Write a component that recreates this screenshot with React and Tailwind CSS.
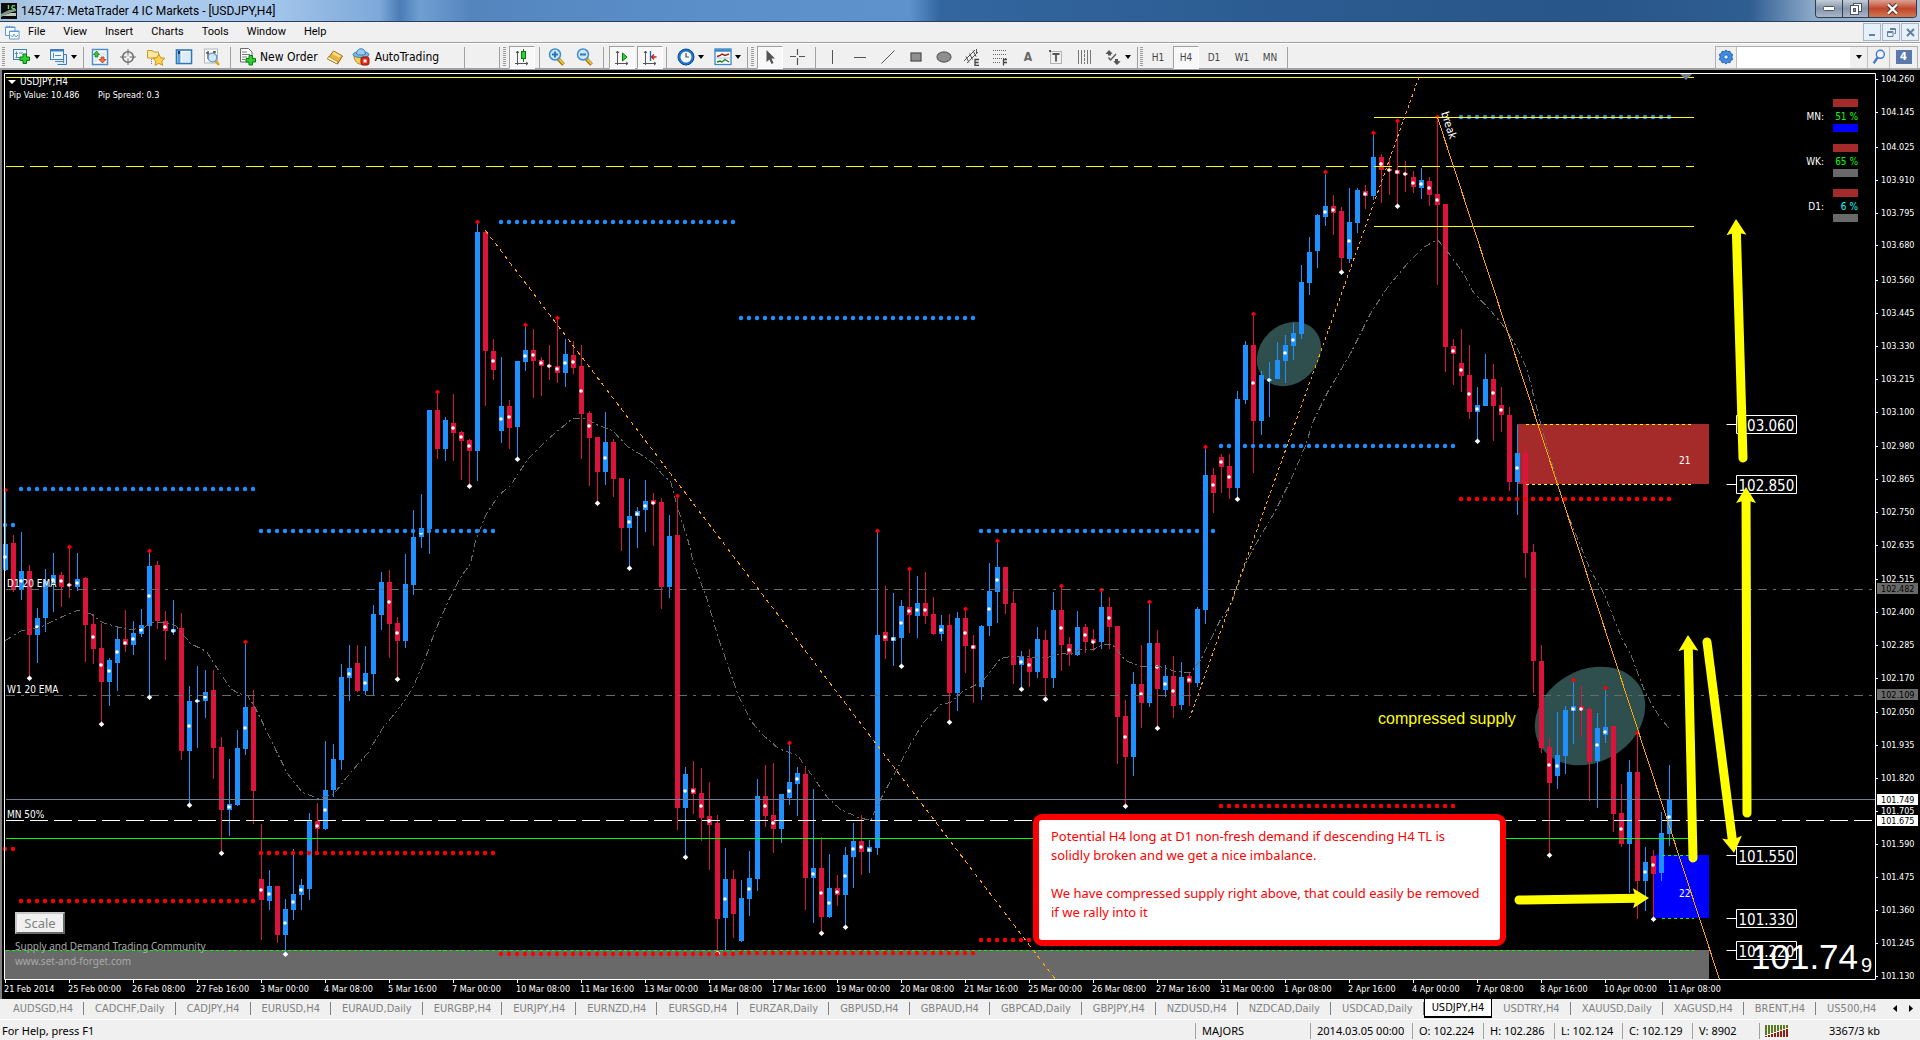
import React, { useState } from "react";

// One row per H4 bar: direction, high, body top, body bottom, low, mid dot, fractal (p = peak, t = trough, pt = both)
const bars = [
    ["u", 490, 544, 570, 571, 557, "p"],
    ["d", 535, 543, 590, 592],
    ["u", 532, 571, 590, 600, 581],
    ["d", 565, 571, 635, 678, 0, "t"],
    ["u", 608, 618, 635, 663, 627],
    ["u", 569, 581, 618, 632],
    ["u", 553, 575, 583, 612, 580],
    ["d", 572, 575, 587, 607, 581],
    ["d", 547, 584, 586, 598, 585, "p"],
    ["u", 553, 579, 587, 591, 583],
    ["d", 577, 578, 625, 662],
    ["d", 614, 624, 649, 664, 637],
    ["d", 623, 648, 682, 724, 665, "t"],
    ["u", 658, 660, 682, 706, 671],
    ["u", 626, 639, 663, 691, 652],
    ["d", 610, 639, 645, 652, 643],
    ["u", 621, 633, 645, 655, 639],
    ["u", 609, 625, 634, 637, 630],
    ["u", 551, 566, 626, 697, 596, "pt"],
    ["d", 561, 565, 621, 629],
    ["d", 611, 621, 631, 660, 627],
    ["u", 600, 629, 632, 635, 631],
    ["d", 613, 628, 751, 760],
    ["u", 686, 701, 751, 805, 726, "t"],
    ["u", 666, 700, 702, 748, 701],
    ["u", 670, 692, 701, 718, 697],
    ["d", 670, 690, 748, 779],
    ["d", 737, 747, 810, 853, 0, "t"],
    ["u", 759, 804, 810, 836, 807],
    ["u", 730, 748, 805, 806],
    ["u", 642, 707, 749, 755, 728, "p"],
    ["d", 690, 707, 791, 824],
    ["d", 824, 879, 900, 940, 890],
    ["u", 870, 886, 901, 910, 894],
    ["d", 886, 886, 935, 943],
    ["u", 899, 909, 935, 954, 923, "t"],
    ["u", 849, 894, 910, 920, 902],
    ["u", 879, 885, 895, 910, 890],
    ["u", 813, 821, 889, 900],
    ["d", 803, 821, 829, 852, 826],
    ["u", 741, 790, 829, 830, 810],
    ["u", 744, 759, 790, 797],
    ["u", 664, 677, 760, 770],
    ["u", 645, 668, 678, 701, 674],
    ["d", 645, 663, 691, 692],
    ["u", 646, 673, 691, 695, 683],
    ["u", 605, 614, 674, 695],
    ["u", 572, 582, 615, 630],
    ["d", 570, 582, 624, 658, 602],
    ["d", 617, 623, 641, 679, 633, "t"],
    ["u", 554, 584, 641, 648],
    ["u", 510, 537, 585, 595],
    ["u", 494, 528, 537, 548, 533],
    ["u", 410, 410, 529, 554],
    ["d", 392, 410, 449, 459, 0, "p"],
    ["u", 417, 420, 449, 461],
    ["d", 394, 423, 433, 461, 428],
    ["d", 431, 432, 441, 480, 437],
    ["d", 439, 440, 451, 486, 446, "t"],
    ["u", 222, 232, 451, 481, 0, "p"],
    ["d", 231, 232, 351, 406],
    ["d", 339, 351, 370, 380, 361],
    ["u", 357, 406, 431, 443, 419],
    ["d", 400, 406, 428, 449, 417],
    ["u", 361, 361, 427, 459, 0, "t"],
    ["u", 325, 350, 362, 371, 356, "p"],
    ["d", 329, 350, 361, 398, 355],
    ["d", 357, 360, 366, 396, 363],
    ["d", 345, 365, 367, 380, 366],
    ["d", 318, 366, 373, 383, 369, "p"],
    ["u", 339, 354, 373, 387, 363],
    ["d", 341, 355, 368, 374, 362],
    ["d", 345, 366, 414, 459, 391],
    ["d", 411, 413, 438, 486, 426],
    ["d", 437, 437, 472, 503, 0, "t"],
    ["u", 412, 442, 472, 485, 458],
    ["d", 439, 442, 479, 497],
    ["d", 478, 478, 528, 551],
    ["u", 479, 516, 528, 568, 522, "t"],
    ["u", 507, 511, 516, 548, 514],
    ["u", 480, 501, 510, 532, 506],
    ["d", 493, 500, 504, 546, 503],
    ["d", 498, 502, 587, 609],
    ["u", 515, 536, 587, 598],
    ["d", 496, 535, 808, 830, 0, "p"],
    ["u", 767, 774, 808, 857, 791, "t"],
    ["d", 761, 788, 794, 814, 791],
    ["d", 768, 793, 818, 841, 806],
    ["d", 782, 816, 825, 870, 821],
    ["d", 815, 823, 919, 953, 0, "t"],
    ["u", 848, 879, 918, 950, 899],
    ["d", 870, 879, 914, 938],
    ["u", 880, 898, 941, 942],
    ["u", 851, 878, 899, 916, 889],
    ["u", 779, 796, 879, 891],
    ["d", 765, 796, 816, 827, 806],
    ["d", 763, 815, 829, 853, 823],
    ["u", 794, 794, 829, 843],
    ["u", 743, 782, 798, 805, 791, "p"],
    ["u", 767, 773, 784, 816, 779],
    ["d", 767, 774, 878, 910],
    ["u", 789, 868, 878, 923, 874],
    ["d", 837, 868, 917, 933, 893, "t"],
    ["u", 854, 888, 917, 918, 903],
    ["d", 875, 888, 895, 906, 892],
    ["u", 847, 855, 895, 927, 876, "t"],
    ["u", 823, 841, 857, 888, 849],
    ["d", 815, 841, 852, 875, 847],
    ["u", 840, 847, 852, 873, 850],
    ["u", 531, 635, 848, 855, 0, "p"],
    ["d", 586, 632, 641, 659, 637],
    ["u", 593, 637, 641, 666, 639],
    ["u", 600, 606, 638, 666, 623, "t"],
    ["d", 569, 607, 615, 633, 611, "p"],
    ["u", 576, 603, 616, 638, 610],
    ["d", 572, 603, 616, 624, 610],
    ["d", 597, 614, 634, 635],
    ["u", 615, 625, 634, 641, 630],
    ["d", 614, 625, 693, 722, 0, "t"],
    ["u", 612, 618, 693, 711],
    ["d", 609, 618, 646, 673, 633, "p"],
    ["d", 635, 645, 649, 703, 647],
    ["u", 625, 626, 687, 700],
    ["u", 563, 591, 626, 636, 609],
    ["u", 541, 567, 592, 623, 580, "p"],
    ["d", 567, 567, 604, 614],
    ["d", 591, 603, 665, 684],
    ["u", 651, 657, 665, 689, 662, "t"],
    ["d", 649, 658, 672, 687, 665],
    ["u", 627, 639, 672, 678],
    ["d", 630, 640, 678, 699, 0, "t"],
    ["u", 592, 610, 678, 688],
    ["d", 586, 610, 645, 671, 628, "p"],
    ["d", 637, 644, 654, 666, 650],
    ["u", 611, 627, 655, 656],
    ["d", 624, 627, 642, 653, 635],
    ["d", 629, 639, 643, 651, 642],
    ["u", 590, 607, 642, 649, 0, "p"],
    ["d", 597, 607, 627, 649, 618],
    ["d", 626, 626, 717, 764],
    ["d", 700, 716, 757, 806, 737, "t"],
    ["u", 672, 684, 757, 776],
    ["d", 645, 684, 703, 728, 694],
    ["u", 602, 643, 703, 707, 0, "p"],
    ["d", 630, 643, 689, 728, 667, "t"],
    ["u", 665, 676, 690, 697, 684],
    ["d", 656, 676, 706, 718, 691],
    ["u", 662, 677, 705, 710],
    ["d", 672, 676, 683, 706, 680],
    ["u", 607, 609, 683, 687],
    ["u", 447, 475, 610, 624, 0, "p"],
    ["d", 468, 475, 493, 513, 485],
    ["d", 454, 457, 467, 493, 462],
    ["d", 454, 466, 488, 499, 477],
    ["u", 391, 399, 488, 499, 0, "t"],
    ["u", 341, 345, 400, 404],
    ["d", 314, 345, 421, 473, 383, "p"],
    ["u", 371, 375, 421, 435],
    ["u", 362, 379, 381, 417, 380],
    ["u", 342, 360, 379, 379],
    ["u", 335, 345, 361, 383, 353],
    ["u", 323, 333, 346, 360, 340],
    ["u", 265, 282, 334, 339],
    ["u", 237, 252, 283, 295],
    ["u", 214, 215, 251, 268],
    ["u", 172, 206, 217, 226, 212, "p"],
    ["d", 195, 206, 213, 235, 210],
    ["d", 207, 211, 258, 272, 0, "t"],
    ["u", 188, 222, 259, 263, 241],
    ["u", 188, 190, 223, 233],
    ["d", 185, 191, 196, 209, 194],
    ["u", 133, 157, 196, 200, 0, "p"],
    ["d", 154, 157, 170, 203, 164],
    ["d", 158, 169, 171, 195, 170],
    ["d", 121, 170, 174, 206, 172, "pt"],
    ["d", 161, 173, 175, 192, 174],
    ["d", 171, 177, 187, 193, 183],
    ["u", 168, 180, 188, 199, 184],
    ["d", 177, 181, 195, 206, 188],
    ["d", 117, 194, 205, 285, 200, "p"],
    ["d", 204, 204, 347, 372],
    ["d", 339, 346, 354, 385, 351],
    ["d", 329, 363, 376, 392, 370],
    ["d", 345, 375, 412, 419, 394],
    ["u", 387, 405, 412, 441, 409, "t"],
    ["u", 354, 379, 406, 406],
    ["d", 364, 379, 406, 441, 393],
    ["d", 387, 405, 415, 432, 410],
    ["d", 407, 415, 482, 491],
    ["u", 425, 453, 482, 515, 468],
    ["d", 445, 453, 553, 578],
    ["d", 544, 552, 661, 693],
    ["d", 645, 661, 748, 753],
    ["d", 738, 747, 783, 855, 765, "t"],
    ["u", 712, 755, 776, 789, 766],
    ["u", 706, 710, 756, 774],
    ["u", 680, 706, 711, 744, 709, "p"],
    ["d", 686, 706, 710, 737, 709],
    ["d", 707, 709, 762, 801],
    ["u", 713, 728, 761, 808, 745],
    ["u", 688, 727, 735, 743, 732, "p"],
    ["d", 726, 726, 814, 832],
    ["d", 784, 813, 844, 847, 829],
    ["u", 760, 772, 844, 893],
    ["d", 733, 772, 881, 919, 0, "p"],
    ["u", 847, 862, 881, 911, 872],
    ["d", 850, 856, 874, 919, 865, "t"],
    ["u", 812, 833, 873, 881],
    ["u", 765, 799, 834, 846, 817],
];

// Previous week's high and low: y, first x, last x
const highDots = [
    [525, 5, 13],
    [489, 21, 253],
    [531, 261, 493],
    [222, 501, 733],
    [318, 741, 973],
    [531, 981, 1213],
    [446, 1221, 1453],
    [117, 1461, 1669],
];
const lowDots = [
    [849, 5, 13],
    [901, 21, 253],
    [853, 261, 493],
    [954, 501, 733],
    [953, 741, 973],
    [940, 981, 1213],
    [806, 1221, 1453],
    [499, 1461, 1669],
];

const ema =
    "5,640 21,630 37,628 62,616 77,610 90,613 102,622 115,626 127,629 142,628 151,622 162,622 175,625 190,643 206,651 220,673 230,688 238,693 247,695 254,706 262,722 277,753 287,773 302,792 318,798 333,794 350,772 367,753 382,728 400,706 412,688 424,660 434,632 448,600 460,577 470,563 475,540 485,515 498,495 510,485 527,459 547,439 572,418 585,418 598,425 612,430 627,446 645,457 653,463 662,474 670,481 677,507 687,538 693,562 707,600 717,635 737,693 750,720 763,735 778,748 797,755 813,777 827,797 840,809 858,817 870,820 882,795 897,768 908,747 923,722 940,704 950,702 962,691 982,681 1000,658 1010,656 1047,657 1060,653 1070,654 1080,649 1093,649 1102,644 1112,644 1125,660 1140,666 1153,665 1163,667 1175,671 1190,672 1200,660 1220,619 1230,605 1245,563 1258,539 1275,510 1290,480 1305,445 1313,420 1327,392 1350,353 1370,313 1387,287 1407,263 1423,247 1437,239 1450,255 1463,273 1473,292 1490,310 1505,328 1518,350 1527,370 1533,395 1542,430 1563,503 1577,538 1590,570 1603,592 1615,622 1622,640 1630,653 1643,688 1653,707 1661,719 1669,728";

const prices = [
    104.26, 104.145, 104.025, 103.91, 103.795, 103.68, 103.56, 103.445, 103.33, 103.215, 103.1, 102.98, 102.865, 102.75,
    102.635, 102.515, 102.4, 102.285, 102.17, 102.05, 101.935, 101.82, 101.705, 101.59, 101.475, 101.36, 101.245, 101.13,
];

const times = [
    "21 Feb 2014", "25 Feb 00:00", "26 Feb 08:00", "27 Feb 16:00", "3 Mar 00:00", "4 Mar 08:00", "5 Mar 16:00",
    "7 Mar 00:00", "10 Mar 08:00", "11 Mar 16:00", "13 Mar 00:00", "14 Mar 08:00", "17 Mar 16:00", "19 Mar 00:00",
    "20 Mar 08:00", "21 Mar 16:00", "25 Mar 00:00", "26 Mar 08:00", "27 Mar 16:00", "31 Mar 00:00", "1 Apr 08:00",
    "2 Apr 16:00", "4 Apr 00:00", "7 Apr 08:00", "8 Apr 16:00", "10 Apr 00:00", "11 Apr 08:00",
];

const tabs = [
    "AUDSGD,H4", "CADCHF,Daily", "CADJPY,H4", "EURUSD,H4", "EURAUD,Daily", "EURGBP,H4", "EURJPY,H4", "EURNZD,H4",
    "EURSGD,H4", "EURZAR,Daily", "GBPUSD,H4", "GBPAUD,H4", "GBPCAD,Daily", "GBPJPY,H4", "NZDUSD,H4", "NZDCAD,Daily",
    "USDCAD,Daily", "USDJPY,H4", "USDTRY,H4", "XAUUSD,Daily", "XAGUSD,H4", "BRENT,H4", "US500,H4",
];

const priceY = (p) => Math.round(446 + (102.98 - p) * 286.5);

const tahoma = "font-['DejaVu_Sans_Condensed','DejaVu_Sans',sans-serif]";
const segoe = "font-['Noto_Sans','Open_Sans',sans-serif]";
const caption = "font-[Roboto,'Noto_Sans',sans-serif]";

const Icon = ({ children, size = 18 }) => (
    <svg width={size} height={size} viewBox="0 0 18 18" fill="none" className="shrink-0">
        {children}
    </svg>
);

const Caret = () => (
    <svg width="6" height="4" viewBox="0 0 6 4" className="shrink-0">
        <path d="M0 0h6L3 4z" fill="#000" />
    </svg>
);

const Sep = () => <div className="h-[21px] w-px shrink-0 bg-[#a0a0a0]" />;

const Grip = () => (
    <svg width="3" height="20" className="shrink-0">
        {[0, 2, 4, 6, 8, 10, 12, 14, 16, 18].map((y) => (
            <rect key={y} y={y} width="3" height="1" fill="#9a9a9a" />
        ))}
    </svg>
);

const Tool = ({ label, on, wide, children }) => (
    <button
        type="button"
        aria-label={label}
        className={
            "flex h-[23px] shrink-0 items-center justify-center " +
            (wide ? "w-9 gap-[3px] " : "w-[26px] ") +
            (on ? "border border-t-[#a0a0a0] border-l-[#a0a0a0] border-r-white border-b-white bg-[#f8f8f8]" : "")
        }
    >
        {children}
    </button>
);

const TitleBar = () => (
    <header className="flex h-[22px] items-start border-b border-[#2a3f5c] bg-[linear-gradient(90deg,#9fbcd8_0px,#b4d0ee_60px,#a4c6ec_270px,#7ca8d8_380px,#4a7cb6_400px,#6f9fd2_420px,#5585bd_470px,#5a8fca_700px,#5d92cd_910px,#33669f_940px,#2b5b90_1300px,#28558a_1600px,#2f5e93_1750px,#8aa8c8_1812px,#a9c0d8_1920px)]">
        <svg width="16" height="16" viewBox="0 0 16 16" className="mt-[3px] ml-px">
            <rect width="16" height="16" fill="#0b0b0b" />
            <path d="M0 11L8 7l7-1v2l-7 2-8 4z" fill="#7f9a86" />
            <path d="M1 13l8-3h6v3z" fill="#b9c7bd" />
            <path d="M7.500 2v4M14 3c-3-1.500-4.500 2-1.500 3l1.500-.5" stroke="#6fd36f" strokeWidth="1.400" fill="none" />
        </svg>
        <h1 className={`mt-px ml-1 text-[12px] leading-5 text-black ${caption}`}>145747: MetaTrader 4 IC Markets - [USDJPY,H4]</h1>
        <div className="mr-[3px] ml-auto flex h-[18px] overflow-hidden rounded-b-[4px] border border-t-0 border-[#2e3d50]">
            <button type="button" aria-label="Minimize" className="flex w-[27px] items-center justify-center border-r border-[#2e3d50] bg-linear-to-b from-[#c3ccd8] via-[#8796aa] to-[#a7b6c9]">
                <svg width="12" height="5"><rect x=".5" y=".5" width="11" height="4" rx="1" fill="#fff" stroke="#4a5566" /></svg>
            </button>
            <button type="button" aria-label="Restore" className="flex w-[26px] items-center justify-center border-r border-[#2e3d50] bg-linear-to-b from-[#c3ccd8] via-[#8796aa] to-[#a7b6c9]">
                <svg width="12" height="12" fill="#fff" stroke="#4a5566">
                    <rect x="3.500" y=".5" width="8" height="8" />
                    <rect x=".5" y="2.500" width="8" height="9" />
                    <rect x="3.500" y="5.500" width="2" height="3" fill="#8796aa" />
                </svg>
            </button>
            <button type="button" aria-label="Close" className="flex w-[47px] items-center justify-center bg-linear-to-b from-[#dba394] via-[#c0452c] to-[#d07850]">
                <svg width="13" height="12" viewBox="0 0 13 12">
                    <path d="M2 1.500l9 9M11 1.500l-9 9" stroke="#4a3030" strokeWidth="4" />
                    <path d="M2 1.500l9 9M11 1.500l-9 9" stroke="#fff" strokeWidth="2.400" />
                </svg>
            </button>
        </div>
    </header>
);

const MenuBar = () => (
    <nav className={`flex h-[21px] items-center border-b border-[#a0a0a0] bg-[#f0f0f0] text-[11px] text-black ${caption}`}>
        <svg width="15" height="15" viewBox="0 0 15 15" fill="#fff" stroke="#5b9bd5" className="ml-[5px]">
            <path d="M.5 2v8.500h9.500V2zM.5 2.500h9.500" />
            <path d="M2 .8v2M4.500.8v2M7 .8v2" />
            <path d="M4.500 6v8h9.500V6zM4.500 6.500h9.500" />
            <path d="M5.500 10l2 2 1.500-3 2 3 2-2" fill="none" />
        </svg>
        <ul className="ml-2 flex gap-[18px]">
            {["File", "View", "Insert", "Charts", "Tools", "Window", "Help"].map((m) => (
                <li key={m}>
                    <button type="button">{m}</button>
                </li>
            ))}
        </ul>
        <div className="mr-px ml-auto flex gap-px">
            <button type="button" aria-label="Minimize chart" className="flex h-[18px] w-[18px] items-center justify-center border border-[#a5b5c5] bg-[#e6f0fa]">
                <svg width="8" height="8"><path d="M1 6h6v2h-6z" fill="#66809a" /></svg>
            </button>
            <button type="button" aria-label="Restore chart" className="flex h-[18px] w-[18px] items-center justify-center border border-[#a5b5c5] bg-[#e6f0fa]">
                <svg width="9" height="9" fill="none" stroke="#66809a"><path d="M3 .5h5.500v5H7M3 1.500h5M.5 3.500h5.500v5H.5zM.5 4.500h5" /></svg>
            </button>
            <button type="button" aria-label="Close chart" className="flex h-[18px] w-[18px] items-center justify-center border border-[#a5b5c5] bg-[#e6f0fa]">
                <svg width="9" height="9"><path d="M1 1l7 7M8 1l-7 7" stroke="#66809a" strokeWidth="2" /></svg>
            </button>
        </div>
    </nav>
);

const PlusBadge = ({ x, y }) => (
    <path
        transform={`translate(${x} ${y})`}
        d="M3.500.5h3.500v3h3v3.500h-3v3h-3.500v-3h-3v-3.500h3z"
        fill="#2fd12f"
        stroke="#0a7a12"
    />
);

const Lens = ({ sign }) => (
    <Icon size={18}>
        <path d="M10 10.500l5.500 6" stroke="#8a6a10" strokeWidth="3.600" />
        <path d="M10.500 10.500l5 5.500" stroke="#f0c22c" strokeWidth="2" />
        <circle cx="7" cy="6.500" r="5.500" fill="#cfe6f8" stroke="#3d8fcb" strokeWidth="1.500" />
        <path d={sign} stroke="#2a78b8" strokeWidth="2" />
    </Icon>
);

const Toolbar = () => {
    const [frame, setFrame] = useState("H4");

    return (
        <div className={`flex h-[27px] items-center border-t border-b-2 border-t-white border-b-[#a0a0a0] bg-[#f0f0f0] pt-0.5 ${tahoma}`}>
            <div className="flex w-[464px] shrink-0 items-center pl-0.5">
                <Grip />
                <div className="ml-[3px] flex gap-px">
                    <Tool label="New chart" wide>
                        <Icon>
                            <rect x=".5" y="1.500" width="13" height="10" fill="#eef6fd" stroke="#3b7fc0" />
                            <path d="M3.500 3.500v6M2 5.500h3M10 5h-4M2.500 9.500h7" stroke="#5c86ad" />
                            <PlusBadge x={6.500} y={5.500} />
                        </Icon>
                        <Caret />
                    </Tool>
                    <Tool label="Profiles" wide>
                        <Icon>
                            <path d="M3.500 6.500h13v10h-9" fill="#dcebf8" stroke="#3b7fc0" />
                            <rect x=".5" y="1.500" width="13" height="10" fill="#eef6fd" stroke="#3b7fc0" />
                            <path d="M.5 2.500h13" stroke="#3b7fc0" strokeWidth="2" />
                            <path d="M3.500 5v5M11 7.500h-6M5 13.500h8M13.500 12v3" stroke="#5c86ad" />
                        </Icon>
                        <Caret />
                    </Tool>
                </div>
                <div className="ml-0.5">
                    <Sep />
                </div>
                <div className="ml-[3px] flex gap-0.5">
                    <Tool label="Market Watch">
                        <Icon>
                            <rect x="1.500" y="1.500" width="15" height="15" fill="#fff" stroke="#4a90cf" strokeWidth="1.500" />
                            <path d="M9 5h6M9 7h6M3 11h4M3 13h4" stroke="#c5d9ea" />
                            <path d="M5.500 3l3 3.500h-1.500v2.500h-3v-2.500H2.500z" fill="#35c435" stroke="#128012" strokeWidth=".8" />
                            <path d="M11.500 15l3.500-3.500h-2v-2.500h-3v2.500H8z" fill="#f4763c" stroke="#b83410" strokeWidth=".8" />
                        </Icon>
                    </Tool>
                    <Tool label="Data Window">
                        <Icon>
                            <circle cx="9" cy="9" r="5.300" stroke="#6e6e6e" strokeWidth="1.600" />
                            <path d="M9 1v6.500M9 10.500V17M1 9h6.500M10.500 9H17" stroke="#6e6e6e" />
                        </Icon>
                    </Tool>
                    <Tool label="Navigator">
                        <Icon>
                            <path d="M.5 2.500h5l1 1.500h5v6h-11z" fill="#fbe7a0" stroke="#c19a2a" />
                            <path d="M4.500 11v6" stroke="#777" strokeDasharray="1 1" />
                            <path d="M11.800 6l1.900 3.800 4.200.5-3.100 2.800.8 4.200-3.800-2-3.800 2 .8-4.200-3-2.800 4.200-.5z" fill="#ffd447" stroke="#c8922a" />
                        </Icon>
                    </Tool>
                    <Tool label="Terminal">
                        <Icon>
                            <rect x="1.500" y="2" width="15" height="13.500" fill="#fff" stroke="#2f76ba" strokeWidth="1.600" />
                            <rect x="2.500" y="3" width="3" height="12" fill="#5aa0de" />
                            <path d="M7 5h8M7 7h8M7 9h8M7 11h8M7 13h8" stroke="#bcd4ea" />
                            <path d="M4 3v3" stroke="#123d6a" strokeWidth="2" />
                        </Icon>
                    </Tool>
                    <Tool label="Strategy Tester">
                        <Icon>
                            <rect x="1.500" y="1" width="13" height="14" fill="#fafafa" stroke="#b5b5b5" />
                            <path d="M5 3v8M11 3v5M3 5h3M10 4h3" stroke="#555" strokeWidth="1.300" />
                            <path d="M12 12.500l4 4.500" stroke="#d9a520" strokeWidth="2.600" />
                            <circle cx="9.500" cy="9.500" r="4.300" fill="#cfe4f5" fillOpacity=".85" stroke="#5f9ccb" strokeWidth="1.300" />
                        </Icon>
                    </Tool>
                </div>
                <div className="ml-[5px]">
                    <Sep />
                </div>
                <button type="button" className="ml-2 flex items-center gap-[3px] text-[12px] text-black">
                    <Icon>
                        <path d="M1.500.5h8l3.500 3.500v10h-11.500z" fill="#fff" stroke="#6a6a6a" />
                        <path d="M3 4h5M3 6.500h8M3 9h5M3 11.500h3" stroke="#7c7c7c" />
                        <PlusBadge x={6.500} y={7} />
                    </Icon>
                    New Order
                </button>
                <button type="button" aria-label="MetaEditor" className="ml-2">
                    <Icon>
                        <path d="M1.500 11L7.500 3l9 5-5 8z" fill="#e9b440" stroke="#9c6a10" />
                        <path d="M1.500 11l10 5v-2.500l-9-5z" fill="#fff3c8" stroke="#9c6a10" strokeWidth=".6" />
                        <path d="M7.500 3.500l8 4.500-2.500 1.500L6 6z" fill="#f9da85" />
                    </Icon>
                </button>
                <button type="button" className="ml-2 flex items-center gap-[5px] text-[12px] text-black">
                    <Icon>
                        <path d="M2 8c0 5 4 8.500 8 8.500s6-4 6-8.500z" fill="#f3cf58" stroke="#b98a1c" />
                        <ellipse cx="9" cy="6.500" rx="8" ry="3" fill="#7fb8e6" stroke="#3a7fb5" />
                        <path d="M4.500 6c0-7 9-7 9 0-2 1.500-7 1.500-9 0z" fill="#9accef" stroke="#3a7fb5" />
                        <rect x="9" y="9" width="8" height="8" rx="2" fill="#e02a1d" stroke="#9e1208" />
                        <rect x="11.500" y="11.500" width="3" height="3" fill="#fff" />
                    </Icon>
                    AutoTrading
                </button>
            </div>
            <Sep />
            <div className="ml-[34px]">
                <Sep />
            </div>
            <div className="flex w-[247px] shrink-0 items-center pl-[3px]">
                <Grip />
                <div className="ml-[3px]">
                    <Tool label="Candlesticks" on>
                        <Icon>
                            <path d="M4.500 3v14M2 15.500h13M3 5l1.500-2 1.500 2M13 14l2 1.500-2 1.500" stroke="#555" />
                            <path d="M10.500 1v13" stroke="#0a7a12" />
                            <rect x="8.500" y="3.500" width="4" height="7" fill="#2fd12f" stroke="#0a7a12" />
                        </Icon>
                    </Tool>
                </div>
                <div className="mr-1 ml-[4px]">
                    <Sep />
                </div>
                <div className="flex gap-0.5">
                    <Tool label="Zoom In">
                        <Lens sign="M7 3.500v6M4 6.500h6" />
                    </Tool>
                    <Tool label="Zoom Out">
                        <Lens sign="M4 6.500h6" />
                    </Tool>
                </div>
                <div className="mr-[5px] ml-[5px]">
                    <Sep />
                </div>
                <div className="flex gap-0.5">
                    <Tool label="Auto Scroll" on>
                        <Icon>
                            <path d="M4.500 3v14M2 15.500h13M3 5l1.500-2 1.500 2M13 14l2 1.500-2 1.500" stroke="#555" />
                            <path d="M9.500 5l4.500 4-4.500 4z" fill="#2fd12f" stroke="#0a7a12" />
                        </Icon>
                    </Tool>
                    <Tool label="Chart Shift" on>
                        <Icon>
                            <path d="M4.500 3v14M2 15.500h13M3 5l1.500-2 1.500 2M13 14l2 1.500-2 1.500" stroke="#555" />
                            <path d="M9.500 3v10" stroke="#1e6fb8" strokeWidth="1.400" />
                            <path d="M15.500 9h-5M13 6.500L10.500 9l2.500 2.500" stroke="#c2260e" strokeWidth="1.400" />
                        </Icon>
                    </Tool>
                </div>
                <div className="ml-[3px]">
                    <Sep />
                </div>
                <div className="ml-[5px] flex gap-px">
                    <Tool label="Periods" wide>
                        <Icon>
                            <circle cx="9" cy="9" r="8" fill="#1d73c9" stroke="#0d4b8c" />
                            <circle cx="9" cy="9" r="5.500" fill="#f3f8fd" />
                            <path d="M9 5v4h3" stroke="#555" strokeWidth="1.200" />
                        </Icon>
                        <Caret />
                    </Tool>
                    <Tool label="Templates" wide>
                        <Icon>
                            <rect x="1" y="1" width="16" height="15.500" fill="#fff" stroke="#3b86c9" strokeWidth="1.300" />
                            <path d="M1 2.500h16" stroke="#3b86c9" strokeWidth="2.500" />
                            <path d="M3 8.500l3-1 2-1.500 3 1.500 4-1.500" stroke="#a8200d" strokeWidth="1.400" />
                            <path d="M1.500 10h15" stroke="#9cc3e4" />
                            <path d="M3 14l3-1 2 1 3-2.500 4 2.500" stroke="#128012" strokeWidth="1.400" />
                        </Icon>
                        <Caret />
                    </Tool>
                </div>
            </div>
            <Sep />
            <div className="flex w-[389px] shrink-0 items-center pl-[3px]">
                <Grip />
                <div className="ml-[3px] flex gap-0.5">
                    <Tool label="Cursor" on>
                        <Icon>
                            <path d="M5.500 2v12l3-2.500 2 4.500 2-1-2-4.500h3.500z" fill="#555" />
                        </Icon>
                    </Tool>
                    <Tool label="Crosshair">
                        <Icon>
                            <path d="M8.500 1v6M8.500 10v7M1 8.500h6M10 8.500h6" stroke="#555" strokeWidth="1.200" />
                        </Icon>
                    </Tool>
                </div>
                <div className="ml-[4px]">
                    <Sep />
                </div>
                <div className="ml-[3px] flex gap-0.5">
                    <Tool label="Vertical Line">
                        <Icon>
                            <path d="M9.500 2v14" stroke="#555" />
                        </Icon>
                    </Tool>
                    <Tool label="Horizontal Line">
                        <Icon>
                            <path d="M3 9.500h12" stroke="#555" />
                        </Icon>
                    </Tool>
                    <Tool label="Trendline">
                        <Icon>
                            <path d="M2.500 15.500l13-13" stroke="#555" />
                        </Icon>
                    </Tool>
                    <Tool label="Rectangle">
                        <Icon>
                            <rect x="4" y="5" width="10" height="8" fill="#8f8f8f" stroke="#555" strokeWidth="1.300" />
                        </Icon>
                    </Tool>
                    <Tool label="Ellipse">
                        <Icon>
                            <ellipse cx="9" cy="9" rx="7" ry="5" fill="#8f8f8f" stroke="#666" strokeWidth="1.300" />
                        </Icon>
                    </Tool>
                    <Tool label="Equidistant Channel">
                        <Icon>
                            <path d="M1 13l11-11M4 15L15 4M3 8.500l3 6M6.500 5.500l3 6M10 2.500l3 6M13.500 1v5" stroke="#555" />
                            <path d="M16 11.500h-4v6h4M12 14.500h3.500" stroke="#444" strokeWidth="1.300" />
                        </Icon>
                    </Tool>
                    <Tool label="Fibonacci Retracement">
                        <Icon>
                            <path d="M2 2.500h14M2 6.500h14M2 10.500h14M2 14.500h8" stroke="#666" strokeDasharray="1 1" />
                            <path d="M16 11.500h-3.500v6M12.500 14.500H16" stroke="#444" strokeWidth="1.300" />
                        </Icon>
                    </Tool>
                    <Tool label="Text">
                        <span className="text-[12px] font-bold text-[#666]">A</span>
                    </Tool>
                    <Tool label="Text Label">
                        <Icon>
                            <rect x="3.500" y="3.500" width="11" height="12" stroke="#777" strokeDasharray="1 1" />
                            <path d="M5.500 6h7M9 6v7.500" stroke="#555" strokeWidth="1.800" />
                            <rect x="2" y="2" width="2" height="2" fill="#555" />
                        </Icon>
                    </Tool>
                    <Tool label="Cycle Lines">
                        <Icon>
                            <path d="M3.500 2v14M6.500 2v14M12.500 2v14M15.500 2v14" stroke="#777" />
                            <path d="M9.500 2v14" stroke="#777" strokeDasharray="3 1" />
                        </Icon>
                    </Tool>
                    <Tool label="Arrows" wide>
                        <Icon>
                            <path d="M5 2l3.500 3.500-1.500.5v1.500h-3V6H1.500zM13 17l-3.500-3.500 1.500-.5v-2h3v2l2.500.5z" fill="#555" />
                            <path d="M4.500 9.500l2 2.500 5.500-6" stroke="#555" strokeWidth="1.300" />
                        </Icon>
                        <Caret />
                    </Tool>
                </div>
            </div>
            <Sep />
            <div className="flex w-[149px] shrink-0 items-center pl-0.5">
                <Grip />
                <div className="ml-0.5 flex gap-0.5">
                    {["H1", "H4", "D1", "W1", "MN"].map((tf) => (
                        <button
                            key={tf}
                            type="button"
                            onClick={() => setFrame(tf)}
                            className={
                                "h-[23px] w-[26px] border text-[10px] text-[#444] " +
                                (frame === tf ? "border-t-[#a0a0a0] border-r-white border-b-white border-l-[#a0a0a0] bg-[#f8f8f8]" : "border-transparent")
                            }
                        >
                            {tf}
                        </button>
                    ))}
                </div>
            </div>
            <Sep />
            <form className="mr-0.5 ml-auto flex h-[23px] w-[203px] shrink-0 border border-[#b0b0b0]" onSubmit={(e) => e.preventDefault()}>
                <button type="button" aria-label="Search options" className="flex w-[21px] items-center justify-center border-r border-[#c0c0c0]">
                    <Icon size={16}>
                        <path d="M9 1l2 2 2.500-.5.5 2.500 2.500 1-1 3 1 3-2.500 1-.5 2.500-2.500-.5-2 2-2-2-2.500.5-.5-2.500-2.500-1 1-3-1-3 2.500-1 .5-2.500L7 3z" fill="#3f8be0" stroke="#1b58ad" />
                        <circle cx="9" cy="9" r="2.500" fill="#dfeeff" stroke="#1b58ad" />
                    </Icon>
                </button>
                <input aria-label="Search" className="min-w-0 flex-1 bg-white px-1 text-[11px] outline-none" />
                <button type="button" aria-label="Search history" className="flex w-[17px] items-center justify-center">
                    <Caret />
                </button>
                <button type="submit" aria-label="Find" className="flex w-[22px] items-center justify-center border-l border-[#c0c0c0]">
                    <Icon size={16}>
                        <circle cx="10.500" cy="6" r="4.500" fill="#eef5ff" stroke="#3f78cf" strokeWidth="1.600" />
                        <path d="M7.500 9.500L3 16" stroke="#3f78cf" strokeWidth="2.600" />
                    </Icon>
                </button>
                <button type="button" aria-label="Messages" className="flex w-[28px] items-center justify-center border-l border-[#c0c0c0]">
                    <span className="flex h-[14px] w-4 items-center justify-center bg-[#5b79ab] text-[11px] font-bold text-white">4</span>
                </button>
            </form>
        </div>
    );
};

// Annotation arrow from (x1, y1) to its tip at (x2, y2)
const Arrow = ({ x1, y1, x2, y2 }) => {
    const angle = (Math.atan2(y2 - y1, x2 - x1) * 180) / Math.PI;
    const len = Math.hypot(x2 - x1, y2 - y1);

    return (
        <g transform={`translate(${x1} ${y1}) rotate(${angle})`} fill="#ff0">
            <path d={`M0 -4.500H${len - 12}V4.500H0A4.500 4.500 0 0 1 0 -4.500z`} />
            <path d={`M${len} 0L${len - 16} -10Q${len - 14} -5 ${len - 14} 0Q${len - 14} 5 ${len - 16} 10z`} />
        </g>
    );
};

const Dots = ({ rows, fill }) =>
    rows.flatMap(([y, from, to]) =>
        Array.from({ length: (to - from) / 8 + 1 }, (_, i) => (
            <circle key={`${y}-${from + i * 8}`} cx={from + i * 8} cy={y} r="2.200" fill={fill} />
        ))
    );

const Candles = () =>
    bars.map(([dir, high, top, bottom, low, mid, mark = ""], i) => {
        const x = 5 + i * 8;
        const fill = dir === "u" ? "#1e90ff" : "#dc143c";

        return (
            <g key={x}>
                <rect x={x} y={high} width="1" height={low - high} fill={fill} />
                <rect x={x - 2} y={top} width="5" height={bottom - top} fill={fill} />
                {mid ? <circle cx={x} cy={mid} r="1.800" fill="#fff" /> : null}
                {mark.includes("p") && <path d={`M${x + 0.5} ${high - 2.5}l2.500 2.500-2.500 2.500-2.500-2.500z`} fill="#f00" />}
                {mark.includes("t") && <path d={`M${x + 0.5} ${low - 2.5}l2.800 2.800-2.800 2.800-2.800-2.800z`} fill="#fff" />}
            </g>
        );
    });

const PriceTag = ({ y, children }) => (
    <g>
        <path d={`M1726 ${y}h10M1736 ${y - 9}h60v18h-60z`} stroke="#fff" fill="none" />
        <text x="1738" y={y + 6} fill="#fff" className="text-[15px]">
            {children}
        </text>
    </g>
);

const AxisTag = ({ y, fill, children }) => (
    <g>
        <rect x="1877" y={y} width="41" height="11" fill={fill} />
        <text x="1881" y={y + 9} fill="#000">
            {children}
        </text>
    </g>
);

const strength = [
    { name: "MN:", value: "51 %", color: "#00ff00", y: 99, low: "#0000ff" },
    { name: "WK:", value: "65 %", color: "#00ff00", y: 144, low: "#696969" },
    { name: "D1:", value: "6 %", color: "#00ffff", y: 189, low: "#696969" },
];

const Chart = () => (
    <main className="relative bg-black">
        <svg viewBox="0 70 1920 929" className={`block h-auto w-full text-[9px] ${tahoma}`} role="img" aria-label="USDJPY H4 chart">
            <rect y="70" width="2" height="929" fill="#808080" />

            {/* zones */}
            <rect x="5" y="950" width="1704" height="29" fill="#696969" />
            <rect x="1517" y="424" width="192" height="60" fill="#a52a2a" />
            <rect x="1654" y="855" width="55" height="63" fill="#00f" />
            <ellipse cx="1289" cy="354" rx="35" ry="29" transform="rotate(-45 1289 354)" fill="#2f4f4f" />
            <ellipse cx="1590" cy="716" rx="58" ry="46" transform="rotate(-30 1590 716)" fill="#2f4f4f" />

            <Candles />
            <Dots rows={highDots} fill="#1e90ff" />
            <Dots rows={lowDots} fill="#f00" />

            {/* levels */}
            <g transform="translate(.5 .5)" fill="none" shapeRendering="crispEdges">
                <path d="M5 589H1875M5 695H1875" stroke="#696969" strokeDasharray="9 6 3 6" />
                <path d="M5 799H1875" stroke="#708090" />
                <path d="M5 820H1875" stroke="#fff" strokeDasharray="18 6" />
                <path d="M5 838H1693" stroke="#0f0" />
                <path d="M5 77H1693M1373 117H1693M1373 226H1693" stroke="#ff0" />
                <path d="M5 166H1693" stroke="#ff0" strokeDasharray="18 6" />
                <path d="M5 950H1693M1661 855h29M1661 918h32" stroke="#0f0" strokeDasharray="3 3" />
                <path d="M1525 424h165M1525 484h165" stroke="#ff0" strokeDasharray="3 3" />
                <polyline points={ema} stroke="#696969" strokeDasharray="7 3 2 3" />
                <path d="M485 230L1055 979" stroke="#ffa500" strokeDasharray="4 4" />
                <path d="M1189 718L1419 75" stroke="#ffa500" strokeDasharray="3 3" />
                <path d="M1437 117L1719 979" stroke="#ffa500" />
            </g>

            {/* frame and scales */}
            <path d="M4.500 979.500V73.500H1875.500V979.500z" stroke="#fff" fill="none" />
            <path d="M1680 74h12l-6 6z" fill="#708090" />
            {prices.map((p) => (
                <g key={p} fill="#fff">
                    <rect x="1876" y={priceY(p)} width="2" height="1" />
                    <text x="1881" y={priceY(p) + 3}>
                        {p.toFixed(3)}
                    </text>
                </g>
            ))}
            <AxisTag y={583} fill="#696969">102.482</AxisTag>
            <AxisTag y={689} fill="#696969">102.109</AxisTag>
            <AxisTag y={794} fill="#fff">101.749</AxisTag>
            <AxisTag y={815} fill="#fff">101.675</AxisTag>
            {times.map((t, i) => (
                <g key={t} fill="#fff">
                    <rect x={5 + i * 64} y="979" width="1" height="4" />
                    <text x={4 + i * 64} y="992">
                        {t}
                    </text>
                </g>
            ))}

            {/* labels */}
            <g fill="#fff">
                <path d="M8 80h8l-4 4z" />
                <text x="9" y="98">Pip Value: 10.486</text>
                <text x="98" y="98">Pip Spread: 0.3</text>
            </g>
            <g fill="#fff" className="text-[10px]">
                <text x="20" y="85">USDJPY,H4</text>
                <text x="7" y="587">D1 20 EMA</text>
                <text x="7" y="693">W1 20 EMA</text>
                <text x="7" y="818">MN 50%</text>
                <text x="1679" y="464">21</text>
                <text x="1679" y="897">22</text>
                <text transform="translate(1441 113) rotate(72)" className="text-[11px]">break</text>
            </g>
            <g fill="#a9a9a9" className="text-[10px] font-['Noto_Sans',sans-serif]">
                <text x="15" y="950">Supply and Demand Trading Community</text>
                <text x="15" y="965">www.set-and-forget.com</text>
            </g>
            <text x="1378" y="724" fill="#ff0" className="text-[16px] font-['Liberation_Sans',Arial,sans-serif]">
                compressed supply
            </text>

            {strength.map((s) => (
                <g key={s.name} className="text-[10px]">
                    <rect x="1833" y={s.y} width="25" height="8" fill="#a52a2a" />
                    <text x="1824" y={s.y + 21} fill="#fff" textAnchor="end">{s.name}</text>
                    <text x="1858" y={s.y + 21} fill={s.color} textAnchor="end">{s.value}</text>
                    <rect x="1833" y={s.y + 25} width="25" height="8" fill={s.low} />
                </g>
            ))}

            <g transform="translate(.5 .5)">
                <PriceTag y={424}>103.060</PriceTag>
                <PriceTag y={484}>102.850</PriceTag>
                <PriceTag y={855}>101.550</PriceTag>
                <PriceTag y={918}>101.330</PriceTag>
                <PriceTag y={950}>101.220</PriceTag>
            </g>
            <g fill="#fff" className="font-['Liberation_Sans',Arial,sans-serif]">
                <text x="1751" y="969" className="text-[35px]">101.74</text>
                <text x="1861" y="972" className="text-[20px]">9</text>
            </g>

            <Arrow x1={1743} y1={458} x2={1736} y2={219} />
            <Arrow x1={1747} y1={813} x2={1746} y2={487} />
            <Arrow x1={1693} y1={858} x2={1688} y2={635} />
            <Arrow x1={1707} y1={642} x2={1734} y2={853} />
            <Arrow x1={1519} y1={900} x2={1649} y2={898} />

            {/* trade idea */}
            <rect x="1036" y="817" width="467" height="126" rx="6" fill="#fff" stroke="#f00" strokeWidth="6" />
            <g fill="#f00" className="text-[13px] font-['Noto_Sans',sans-serif]">
                <text x="1051" y="841">Potential H4 long at D1 non-fresh demand if descending H4 TL is</text>
                <text x="1051" y="860">solidly broken and we get a nice imbalance.</text>
                <text x="1051" y="898">We have compressed supply right above, that could easily be removed</text>
                <text x="1051" y="917">if we rally into it</text>
            </g>
        </svg>
        <button
            type="button"
            className={`absolute bottom-[65px] left-[15px] h-[22px] w-[50px] border-2 border-t-[#c8c8c8] border-r-[#696969] border-b-[#696969] border-l-[#c8c8c8] bg-[#f0f0f0] text-[13px] leading-4 text-[#808080] ${segoe}`}
        >
            Scale
        </button>
    </main>
);

const ChartTabs = () => {
    const [active, setActive] = useState("USDJPY,H4");

    return (
        <div className={`flex h-[21px] items-start overflow-hidden border-b border-white bg-[#f0f0f0] pl-0.5 text-[11px] text-[#808080] ${tahoma}`}>
            {tabs.map((t) => (
                <button
                    key={t}
                    type="button"
                    onClick={() => setActive(t)}
                    className={
                        t === active
                            ? "h-[19px] shrink-0 border-x border-b-2 border-black bg-white px-[7px] leading-[18px] text-black"
                            : "mt-[3px] h-[13px] shrink-0 border-r border-[#808080] pr-[10px] pl-[11px] leading-[13px] last-of-type:border-r-0"
                    }
                >
                    {t}
                </button>
            ))}
            <div className="mr-[7px] ml-auto flex gap-3 pt-1.5">
                <button type="button" aria-label="Scroll tabs left" className="block">
                    <svg width="4" height="7"><path d="M4 0v7L0 3.500z" fill="#000" /></svg>
                </button>
                <button type="button" aria-label="Scroll tabs right" className="block">
                    <svg width="4" height="7"><path d="M0 0v7l4-3.500z" fill="#000" /></svg>
                </button>
            </div>
        </div>
    );
};

const StatusBar = () => (
    <footer className={`flex h-5 items-center bg-[#f0f0f0] pt-0.5 text-[11px] text-black ${segoe}`}>
        <span className="flex-1 pl-0.5">For Help, press F1</span>
        <span className="w-[115px] border-l border-[#a0a0a0] pl-1.5">MAJORS</span>
        <span className="w-[102px] border-l border-[#a0a0a0] pl-1.5">2014.03.05 00:00</span>
        <span className="w-[71px] border-l border-[#a0a0a0] pl-1.5">O: 102.224</span>
        <span className="w-[71px] border-l border-[#a0a0a0] pl-1.5">H: 102.286</span>
        <span className="w-[68px] border-l border-[#a0a0a0] pl-1.5">L: 102.124</span>
        <span className="w-[70px] border-l border-[#a0a0a0] pl-1.5">C: 102.129</span>
        <span className="w-[67px] border-l border-[#a0a0a0] pl-1.5">V: 8902</span>
        <span className="flex w-[161px] items-center border-l border-[#a0a0a0] pl-[5px]">
            <svg width="24" height="12">
                {[0, 3, 6, 9, 12, 15, 18, 21].map((x, i) => (
                    <g key={x}>
                        <rect x={x} width="2" height={10 - i} fill="#5b7a1f" />
                        <rect x={x} y={11 - i} width="2" height={1 + i} fill="#8f1f10" />
                    </g>
                ))}
            </svg>
            <span className="pl-10">3367/3 kb</span>
        </span>
    </footer>
);

const App = () => (
    <div className="min-h-screen bg-[#f0f0f0]">
        <TitleBar />
        <MenuBar />
        <Toolbar />
        <Chart />
        <ChartTabs />
        <StatusBar />
    </div>
);

export default App;
